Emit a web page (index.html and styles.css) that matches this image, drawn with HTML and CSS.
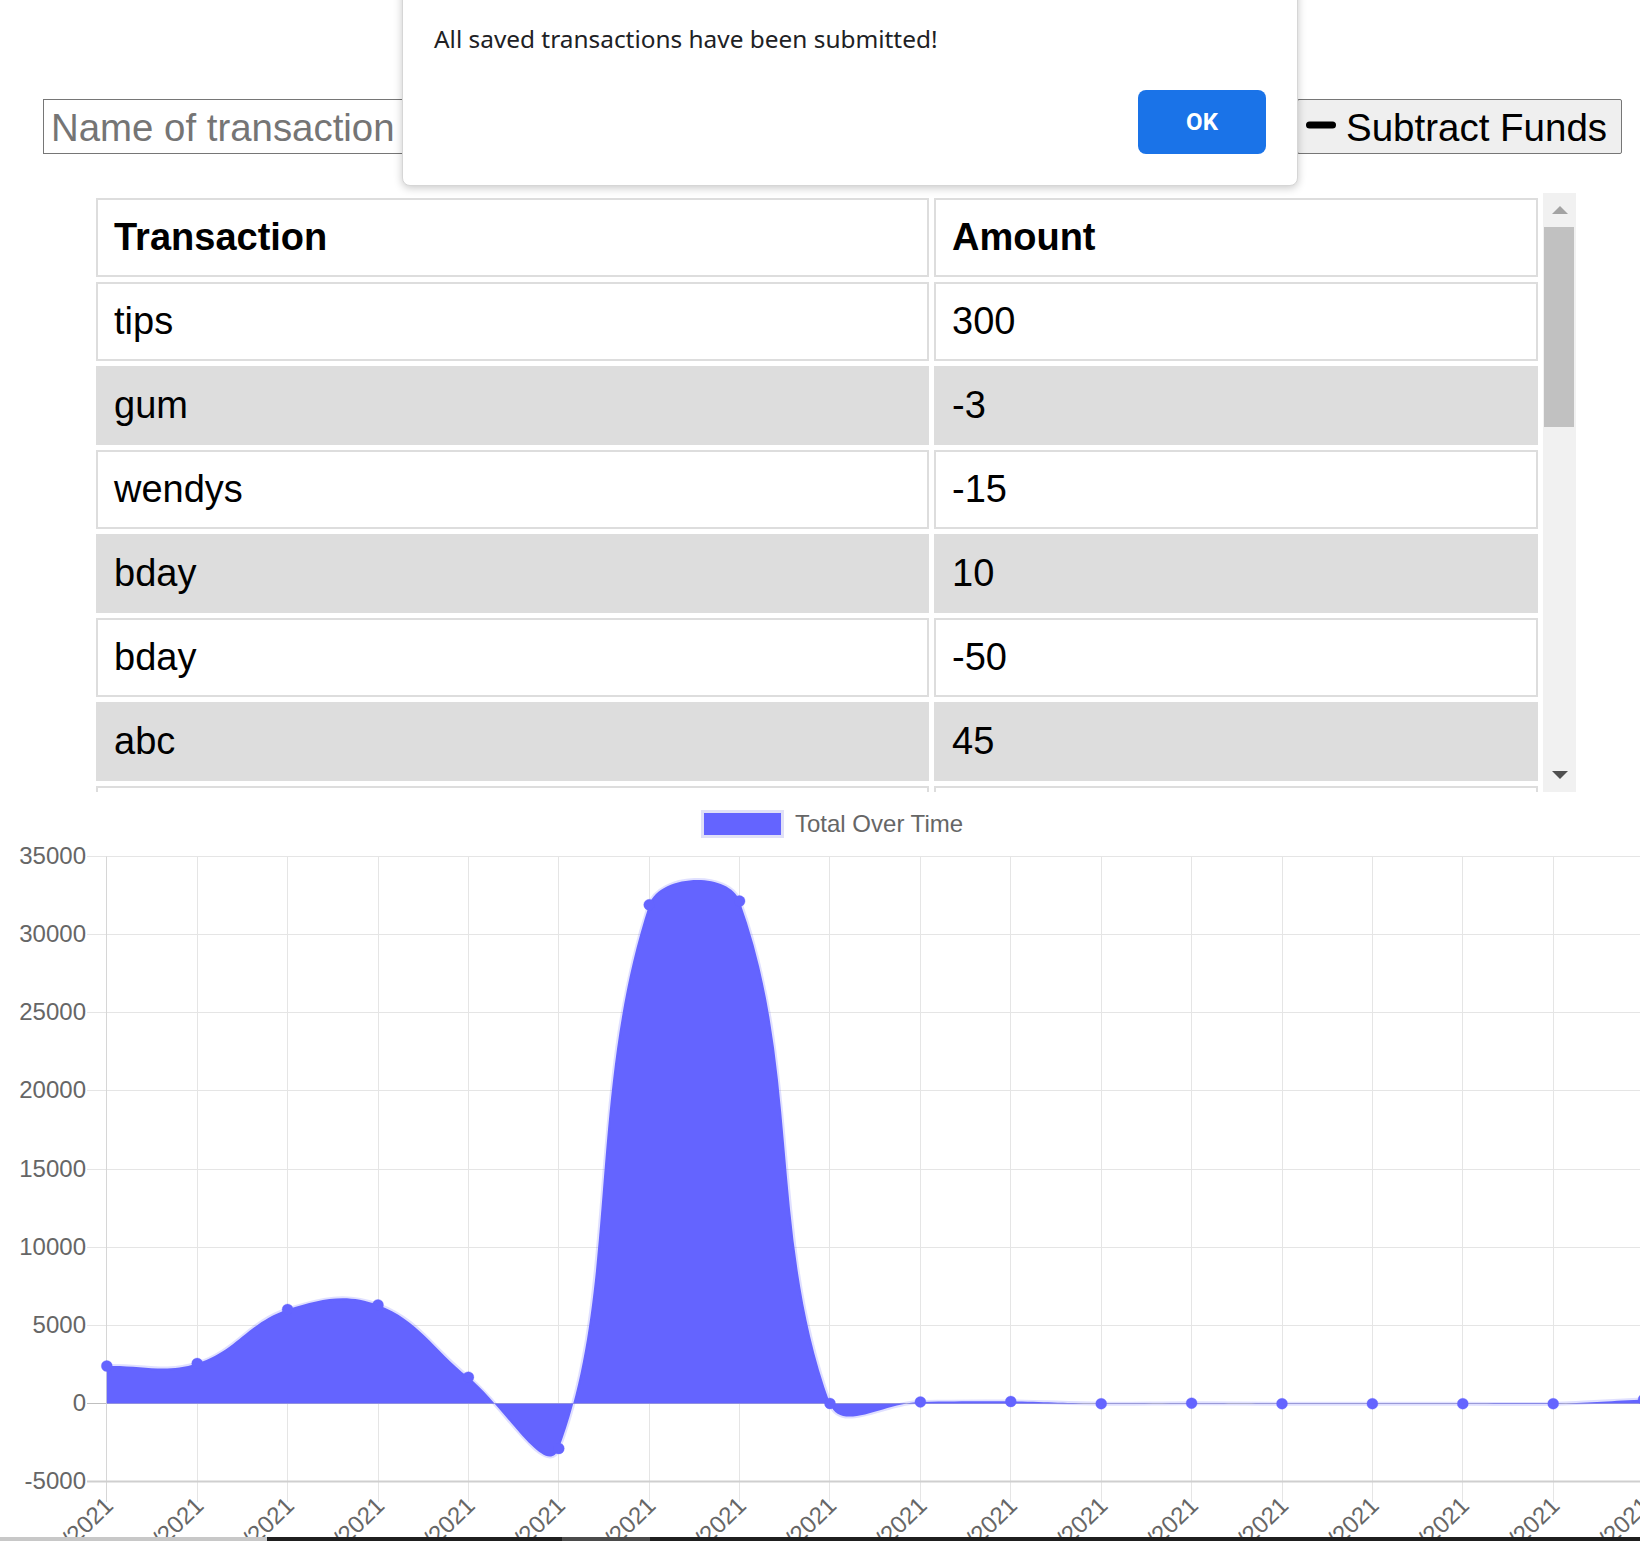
FILE: index.html
```html
<!DOCTYPE html>
<html lang="en">
<head>
<meta charset="utf-8">
<title>Budget Tracker</title>
<link rel="stylesheet" href="styles.css">
</head>
<body>
<div class="controls">
  <input class="field field-name" type="text" placeholder="Name of transaction">
  <input class="field field-amount" type="text" placeholder="Transaction amount">
  <button class="btn btn-add" type="button"><svg class="icon" width="30" height="30" viewBox="0 0 30 30"><rect x="0" y="11.5" width="30" height="7" rx="3.5"/><rect x="11.5" y="0" width="7" height="30" rx="3.5"/></svg><span>Add Funds</span></button>
  <button class="btn btn-sub" type="button"><svg class="icon icon-minus" width="30" height="8" viewBox="0 0 30 8"><rect x="0" y="0.5" width="30" height="7" rx="3.5"/></svg><span>Subtract Funds</span></button>
</div>

<div class="table-wrap">
  <div class="table-scroll">
    <table class="ledger">
      <thead>
        <tr><th class="col-name">Transaction</th><th>Amount</th></tr>
      </thead>
      <tbody>
        <tr><td>tips</td><td>300</td></tr>
        <tr><td>gum</td><td>-3</td></tr>
        <tr><td>wendys</td><td>-15</td></tr>
        <tr><td>bday</td><td>10</td></tr>
        <tr><td>bday</td><td>-50</td></tr>
        <tr><td>abc</td><td>45</td></tr>
        <tr class="row-peek"><td></td><td></td></tr>
      </tbody>
    </table>
  </div>
  <div class="vscroll">
    <div class="vs-btn"><span class="arrow-up"></span></div>
    <div class="vs-track"><div class="vs-thumb"></div></div>
    <div class="vs-btn"><span class="arrow-down"></span></div>
  </div>
</div>

<svg class="chart" width="1640" height="745" viewBox="0 792 1640 745" xmlns="http://www.w3.org/2000/svg">
  <g class="legend">
    <rect class="legend-box" x="702.5" y="811.5" width="80" height="25"/>
    <text class="legend-label" x="795" y="823.5">Total Over Time</text>
  </g>
  <path class="grid" d="M87 856.5H1640M87 934.5H1640M87 1012.5H1640M87 1090.5H1640M87 1169.5H1640M87 1247.5H1640M87 1325.5H1640"/>
  <path class="grid" d="M197.5 856.5V1502M287.5 856.5V1502M378.5 856.5V1502M468.5 856.5V1502M558.5 856.5V1502M649.5 856.5V1502M739.5 856.5V1502M829.5 856.5V1502M920.5 856.5V1502M1010.5 856.5V1502M1101.5 856.5V1502M1191.5 856.5V1502M1282.5 856.5V1502M1372.5 856.5V1502M1462.5 856.5V1502M1553.5 856.5V1502"/>
  <path class="zero" d="M87 1403.5H1640"/>
  <path class="axis-y" d="M106.5 856.5V1502"/>
  <path class="axis-x" d="M87 1481.5H1640"/>
  <g class="ylabels">
    <text x="86" y="855.5">35000</text>
    <text x="86" y="933.5">30000</text>
    <text x="86" y="1011.5">25000</text>
    <text x="86" y="1089.5">20000</text>
    <text x="86" y="1168.5">15000</text>
    <text x="86" y="1246.5">10000</text>
    <text x="86" y="1324.5">5000</text>
    <text x="86" y="1402.5">0</text>
    <text x="86" y="1480.5">-5000</text>
  </g>
  <g class="xlabels">
    <text transform="translate(108.8 1501) rotate(-44)">9/14/2021</text>
    <text transform="translate(199.2 1501) rotate(-44)">9/16/2021</text>
    <text transform="translate(289.6 1501) rotate(-44)">9/20/2021</text>
    <text transform="translate(380 1501) rotate(-44)">9/21/2021</text>
    <text transform="translate(470.4 1501) rotate(-44)">9/23/2021</text>
    <text transform="translate(560.8 1501) rotate(-44)">9/27/2021</text>
    <text transform="translate(651.2 1501) rotate(-44)">10/1/2021</text>
    <text transform="translate(741.6 1501) rotate(-44)">10/4/2021</text>
    <text transform="translate(832 1501) rotate(-44)">10/6/2021</text>
    <text transform="translate(922.4 1501) rotate(-44)">10/8/2021</text>
    <text transform="translate(1012.8 1501) rotate(-44)">10/11/2021</text>
    <text transform="translate(1103.2 1501) rotate(-44)">10/12/2021</text>
    <text transform="translate(1193.6 1501) rotate(-44)">10/14/2021</text>
    <text transform="translate(1284 1501) rotate(-44)">10/15/2021</text>
    <text transform="translate(1374.4 1501) rotate(-44)">10/18/2021</text>
    <text transform="translate(1464.8 1501) rotate(-44)">10/19/2021</text>
    <text transform="translate(1555.2 1501) rotate(-44)">10/21/2021</text>
    <text transform="translate(1645.6 1501) rotate(-44)">10/22/2021</text>
  </g>
  <path id="area" class="area" d=""/>
  <path id="line" class="line" d=""/>
  <g id="points" class="points"></g>
</svg>

<div class="taskbar">
  <div class="tb-a"></div>
  <div class="tb-b"></div>
  <div class="tb-c"></div>
  <div class="tb-d"></div>
</div>

<div class="dialog" role="alertdialog">
  <p class="dialog-msg">All saved transactions have been submitted!</p>
  <div class="dialog-actions">
    <button class="dialog-ok" type="button">OK</button>
  </div>
</div>

<script src="plot.js"></script>
</body>
</html>
```

FILE: styles.css
```css
* {
  box-sizing: border-box;
}

html,
body {
  margin: 0;
  padding: 0;
  background: #fff;
  overflow: hidden;
}

body {
  position: relative;
  width: 1640px;
  height: 1541px;
  font-family: "Liberation Sans", Arial, sans-serif;
  color: #000;
}

/* ---------- top controls ---------- */
.controls {
  display: flex;
  align-items: stretch;
  gap: 12px;
  height: 55px;
  margin: 99px 18px 0 43px;
}

.field {
  height: 55px;
  margin: 0;
  padding: 3px 4px 0 7px;
  border: 1px solid #767676;
  border-radius: 0;
  background: #fff;
  color: #000;
  font: 38.4px "Liberation Sans", Arial, sans-serif;
  outline: none;
}

.field::placeholder {
  color: #757575;
}

.field-name {
  width: 420px;
}

.field-amount {
  width: 400px;
}

.btn {
  display: flex;
  align-items: center;
  height: 55px;
  margin: 0;
  padding: 3px 8px 0;
  border: 1px solid #767676;
  border-radius: 2px;
  background: #efefef;
  color: #000;
  font: 38.5px "Liberation Sans", Arial, sans-serif;
  white-space: nowrap;
}

.btn-sub {
  width: 325px;
  margin-left: auto;
}

.icon {
  flex: none;
  margin-right: 10px;
  fill: #000;
}

.icon-minus {
  margin-bottom: 6px;
}

/* ---------- table ---------- */
.table-wrap {
  display: flex;
  height: 599px;
  margin: 39px 0 0 91px;
}

.table-scroll {
  width: 1452px;
  height: 599px;
  overflow: hidden;
}

.ledger {
  width: 1452px;
  table-layout: fixed;
  border-collapse: separate;
  border-spacing: 5px;
  font: 38px "Liberation Sans", Arial, sans-serif;
}

.ledger th,
.ledger td {
  height: 79px;
  padding: 0 16px;
  border: 2px solid #ddd;
  line-height: 75px;
  text-align: left;
  white-space: nowrap;
  background: #fff;
}

.ledger th {
  font-weight: bold;
}

.ledger .col-name {
  width: 833px;
}

.ledger tbody tr:nth-child(even) td {
  background: #ddd;
}

.vscroll {
  display: flex;
  flex-direction: column;
  width: 33px;
  height: 599px;
  background: #f1f1f1;
}

.vs-btn {
  display: flex;
  align-items: center;
  justify-content: center;
  height: 34px;
  flex: none;
}

.vs-track {
  flex: 1;
}

.vs-thumb {
  height: 200px;
  margin: 0 2px 0 1px;
  background: #c1c1c1;
}

.arrow-up {
  width: 0;
  height: 0;
  border-left: 8px solid transparent;
  border-right: 8px solid transparent;
  border-bottom: 8px solid #a3a3a3;
}

.arrow-down {
  width: 0;
  height: 0;
  border-left: 8px solid transparent;
  border-right: 8px solid transparent;
  border-top: 8px solid #505050;
}

/* ---------- chart ---------- */
.chart {
  display: block;
}

.chart text {
  font-family: "Liberation Sans", Arial, sans-serif;
  font-size: 24px;
  fill: #666;
}

.ylabels text,
.xlabels text {
  text-anchor: end;
  dominant-baseline: central;
}

.legend-label {
  dominant-baseline: central;
}

.legend-box {
  fill: #6464ff;
  stroke: #e0e0f7;
  stroke-width: 3;
}

.grid {
  fill: none;
  stroke: #e5e5e5;
  stroke-width: 1;
}

.zero {
  fill: none;
  stroke: #bfbfbf;
  stroke-width: 1;
}

.axis-y {
  fill: none;
  stroke: #d6d6d6;
  stroke-width: 1;
}

.axis-x {
  fill: none;
  stroke: #cfcfcf;
  stroke-width: 2;
}

.area {
  fill: #6464ff;
}

.line {
  fill: none;
  stroke: rgba(100, 100, 255, 0.2);
  stroke-width: 4;
}

.points circle {
  fill: #6464ff;
  stroke: rgba(100, 100, 255, 0.3);
  stroke-width: 1;
}

/* ---------- bottom strip ---------- */
.taskbar {
  display: flex;
  height: 4px;
}

.tb-a {
  width: 267px;
  background: #c8c8c8;
}

.tb-b {
  width: 295px;
  background: #1f1f1f;
}

.tb-c {
  width: 88px;
  background: #4b4b4b;
}

.tb-d {
  flex: 1;
  background: #1f1f1f;
}

/* ---------- alert dialog ---------- */
.dialog {
  position: absolute;
  left: 402px;
  top: -30px;
  width: 896px;
  height: 216px;
  display: flex;
  flex-direction: column;
  padding: 52px 31px 31px;
  border: 1px solid #d6d6d6;
  border-radius: 8px;
  background: #fff;
  box-shadow: 0 2px 8px rgba(0, 0, 0, 0.22);
}

.dialog-msg {
  margin: 0;
  font: 24.4px/32px "Noto Sans", sans-serif;
  color: #202124;
}

.dialog-actions {
  display: flex;
  justify-content: flex-end;
  margin-top: auto;
}

.dialog-ok {
  width: 128px;
  height: 64px;
  border: 0;
  border-radius: 8px;
  background: #1a73e8;
  color: #fff;
  font: 700 24px Roboto, sans-serif;
}
```

FILE: plot.js
```js
(function () {
  var NS = 'http://www.w3.org/2000/svg';
  var X0 = 106.8, DX = 90.4, Y0 = 1403.5, SCALE = 547 / 35000;
  var TOP = 856.5, BOTTOM = 1481.5, LEFT = 106.8, RIGHT = 2000;
  var TENSION = 0.4;
  var totals = [2400, 2560, 6016, 6310, 1683, -2880, 31910, 32150, 0, 100, 128, -15, 20, -15, -15, -15, -15, 256, 420];

  var pts = totals.map(function (v, i) {
    return { x: X0 + DX * i, y: Y0 - v * SCALE };
  });

  function cap(v, lo, hi) {
    return Math.max(Math.min(v, hi), lo);
  }

  pts.forEach(function (cur, i) {
    var prev = pts[i - 1] || cur;
    var next = pts[i + 1] || cur;
    var d01 = Math.hypot(cur.x - prev.x, cur.y - prev.y);
    var d12 = Math.hypot(next.x - cur.x, next.y - cur.y);
    var s01 = d01 / (d01 + d12) || 0;
    var s12 = d12 / (d01 + d12) || 0;
    var fa = TENSION * s01;
    var fb = TENSION * s12;
    cur.cpx = cap(cur.x - fa * (next.x - prev.x), LEFT, RIGHT);
    cur.cpy = cap(cur.y - fa * (next.y - prev.y), TOP, BOTTOM);
    cur.cnx = cap(cur.x + fb * (next.x - prev.x), LEFT, RIGHT);
    cur.cny = cap(cur.y + fb * (next.y - prev.y), TOP, BOTTOM);
  });

  var d = 'M' + pts[0].x + ' ' + pts[0].y;
  for (var i = 1; i < pts.length; i++) {
    var a = pts[i - 1];
    var b = pts[i];
    d += ' C' + a.cnx + ' ' + a.cny + ' ' + b.cpx + ' ' + b.cpy + ' ' + b.x + ' ' + b.y;
  }
  var last = pts[pts.length - 1];

  document.getElementById('line').setAttribute('d', d);
  document.getElementById('area').setAttribute('d',
    d + ' L' + last.x + ' ' + Y0 + ' L' + pts[0].x + ' ' + Y0 + ' Z');

  var g = document.getElementById('points');
  pts.forEach(function (p) {
    var c = document.createElementNS(NS, 'circle');
    c.setAttribute('cx', p.x);
    c.setAttribute('cy', p.y);
    c.setAttribute('r', 5.5);
    g.appendChild(c);
  });
})();
```
